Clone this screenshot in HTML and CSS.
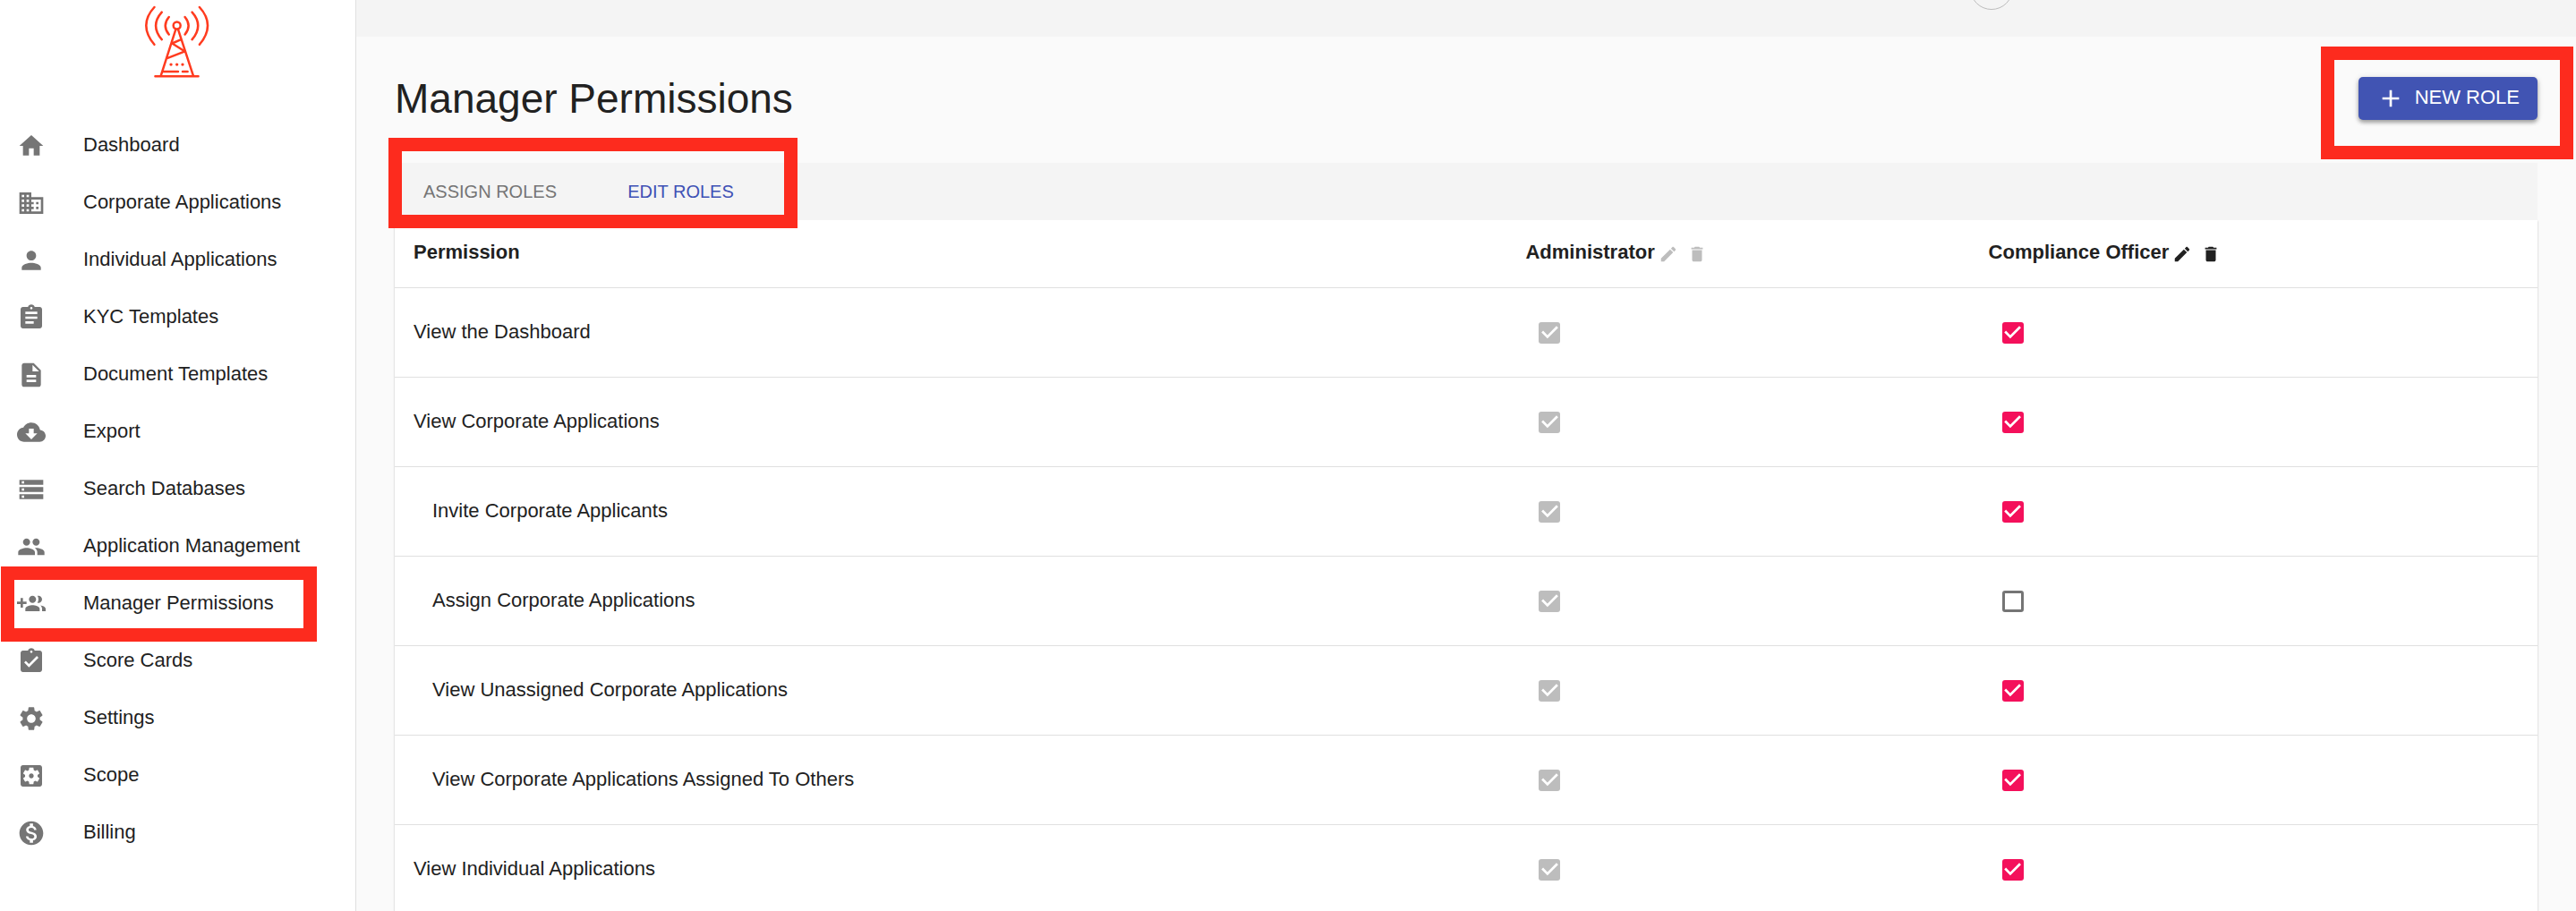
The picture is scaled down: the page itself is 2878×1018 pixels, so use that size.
FILE: index.html
```
<!DOCTYPE html>
<html lang="en">
<head>
<meta charset="utf-8">
<meta name="viewport" content="width=device-width, initial-scale=1">
<title>Manager Permissions</title>
<link rel="stylesheet" href="styles.css">
</head>
<body>
<svg class="sprite" aria-hidden="true">
  <symbol id="edit" viewBox="0 0 24 24"><path d="M3 17.25V21h3.75L17.81 9.94l-3.75-3.75L3 17.25zM20.71 7.04c.39-.39.39-1.02 0-1.41l-2.34-2.34c-.39-.39-1.02-.39-1.41 0l-1.83 1.83 3.75 3.75 1.83-1.83z"/></symbol>
  <symbol id="delete" viewBox="0 0 24 24"><path d="M6 19c0 1.1.9 2 2 2h8c1.1 0 2-.9 2-2V7H6v12zM19 4h-3.5l-1-1h-5l-1 1H5v2h14V4z"/></symbol>
</svg>
<div class="app">
  <aside class="sidebar">
    <a class="logo" href="#" aria-label="Home">
      <svg class="logo-mark" viewBox="480 15 225 250" fill="none" stroke="#ff3b1f" stroke-width="7.5" stroke-linecap="round" stroke-linejoin="round">
        <path d="M566 57Q542 86 566 116M542 41Q502 86 542 133M517 24Q462 84 517 150"/>
        <path d="M620 57Q644 86 620 116M644 41Q684 86 644 133M669 24Q724 84 669 150"/>
        <circle cx="593" cy="86" r="12"/>
        <path d="M589 99L539 255M597 99L648 255M520 257H665M607 133L577 146L620 173L558 197M549 241H597M612 241H629"/>
        <path stroke-width="10" d="M573 217h.1M593 217h.1M612 217h.1"/>
      </svg>
    </a>
    <nav class="nav">
      <a class="nav-item" href="#"><svg class="icon" viewBox="0 0 24 24"><path d="M10 20v-6h4v6h5v-8h3L12 3 2 12h3v8z"/></svg><span class="nav-label">Dashboard</span></a>
      <a class="nav-item" href="#"><svg class="icon" viewBox="0 0 24 24"><path d="M12 7V3H2v18h20V7H12zM6 19H4v-2h2v2zm0-4H4v-2h2v2zm0-4H4V9h2v2zm0-4H4V5h2v2zm4 12H8v-2h2v2zm0-4H8v-2h2v2zm0-4H8V9h2v2zm0-4H8V5h2v2zm10 12h-8v-2h2v-2h-2v-2h2v-2h-2V9h8v10zm-2-8h-2v2h2v-2zm0 4h-2v2h2v-2z"/></svg><span class="nav-label">Corporate Applications</span></a>
      <a class="nav-item" href="#"><svg class="icon" viewBox="0 0 24 24"><path d="M12 12c2.21 0 4-1.79 4-4s-1.79-4-4-4-4 1.79-4 4 1.79 4 4 4zm0 2c-2.67 0-8 1.34-8 4v2h16v-2c0-2.66-5.33-4-8-4z"/></svg><span class="nav-label">Individual Applications</span></a>
      <a class="nav-item" href="#"><svg class="icon" viewBox="0 0 24 24"><path d="M19 3h-4.18C14.4 1.84 13.3 1 12 1c-1.3 0-2.4.84-2.82 2H5c-1.1 0-2 .9-2 2v14c0 1.1.9 2 2 2h14c1.1 0 2-.9 2-2V5c0-1.1-.9-2-2-2zm-7 0c.55 0 1 .45 1 1s-.45 1-1 1-1-.45-1-1 .45-1 1-1zm2 14H7v-2h7v2zm3-4H7v-2h10v2zm0-4H7V7h10v2z"/></svg><span class="nav-label">KYC Templates</span></a>
      <a class="nav-item" href="#"><svg class="icon" viewBox="0 0 24 24"><path d="M14 2H6c-1.1 0-1.99.9-1.99 2L4 20c0 1.1.89 2 1.99 2H18c1.1 0 2-.9 2-2V8l-6-6zm2 16H8v-2h8v2zm0-4H8v-2h8v2zm-3-5V3.5L18.5 9H13z"/></svg><span class="nav-label">Document Templates</span></a>
      <a class="nav-item" href="#"><svg class="icon" viewBox="0 0 24 24"><path d="M19.35 10.04C18.67 6.59 15.64 4 12 4 9.11 4 6.6 5.64 5.35 8.04 2.34 8.36 0 10.91 0 14c0 3.31 2.69 6 6 6h13c2.76 0 5-2.24 5-5 0-2.64-2.05-4.78-4.65-4.96zM17 13l-5 5-5-5h3V9h4v4h3z"/></svg><span class="nav-label">Export</span></a>
      <a class="nav-item" href="#"><svg class="icon" viewBox="0 0 24 24"><path d="M2 20h20v-4H2v4zm2-3h2v2H4v-2zM2 4v4h20V4H2zm4 3H4V5h2v2zm-4 7h20v-4H2v4zm2-3h2v2H4v-2z"/></svg><span class="nav-label">Search Databases</span></a>
      <a class="nav-item" href="#"><svg class="icon" viewBox="0 0 24 24"><path d="M16 11c1.66 0 2.99-1.34 2.99-3S17.66 5 16 5c-1.66 0-3 1.34-3 3s1.34 3 3 3zm-8 0c1.66 0 2.99-1.34 2.99-3S9.66 5 8 5C6.34 5 5 6.34 5 8s1.34 3 3 3zm0 2c-2.33 0-7 1.17-7 3.5V19h14v-2.5c0-2.33-4.67-3.5-7-3.5zm8 0c-.29 0-.62.02-.97.05 1.16.84 1.97 1.97 1.97 3.45V19h6v-2.5c0-2.33-4.67-3.5-7-3.5z"/></svg><span class="nav-label">Application Management</span></a>
      <a class="nav-item highlighted" href="#" aria-current="page"><svg class="icon" viewBox="0 0 24 24"><path d="M8 10H5V7H3v3H0v2h3v3h2v-3h3v-2zm10 1c1.66 0 2.99-1.34 2.99-3S19.66 5 18 5c-.32 0-.63.05-.91.14.57.81.9 1.79.9 2.86s-.34 2.04-.9 2.86c.28.09.59.14.91.14zm-5 0c1.66 0 2.99-1.34 2.99-3S14.66 5 13 5c-1.66 0-3 1.34-3 3s1.34 3 3 3zm6.62 2.16c.83.73 1.38 1.66 1.38 2.84v2h3v-2c0-1.54-2.37-2.49-4.38-2.84zM13 13c-2 0-6 1-6 3v2h12v-2c0-2-4-3-6-3z"/></svg><span class="nav-label">Manager Permissions</span></a>
      <a class="nav-item" href="#"><svg class="icon" viewBox="0 0 24 24"><path d="M19 3h-4.18C14.4 1.84 13.3 1 12 1c-1.3 0-2.4.84-2.82 2H5c-1.1 0-2 .9-2 2v14c0 1.1.9 2 2 2h14c1.1 0 2-.9 2-2V5c0-1.1-.9-2-2-2zm-7 0c.55 0 1 .45 1 1s-.45 1-1 1-1-.45-1-1 .45-1 1-1zm-2 14l-4-4 1.41-1.41L10 14.17l6.59-6.59L18 9l-8 8z"/></svg><span class="nav-label">Score Cards</span></a>
      <a class="nav-item" href="#"><svg class="icon" viewBox="0 0 24 24"><path d="M19.14,12.94c0.04-0.3,0.06-0.61,0.06-0.94c0-0.32-0.02-0.64-0.07-0.94l2.03-1.58c0.18-0.14,0.23-0.41,0.12-0.61l-1.92-3.32c-0.12-0.22-0.37-0.29-0.59-0.22l-2.39,0.96c-0.5-0.38-1.03-0.7-1.62-0.94L14.4,2.81c-0.04-0.24-0.24-0.41-0.48-0.41h-3.84c-0.24,0-0.43,0.17-0.47,0.41L9.25,5.35C8.66,5.59,8.12,5.92,7.63,6.29L5.24,5.33c-0.22-0.08-0.47,0-0.59,0.22L2.74,8.87C2.62,9.08,2.66,9.34,2.86,9.48l2.03,1.58C4.84,11.36,4.8,11.69,4.8,12s0.02,0.64,0.07,0.94l-2.03,1.58c-0.18,0.14-0.23,0.41-0.12,0.61l1.92,3.32c0.12,0.22,0.37,0.29,0.59,0.22l2.39-0.96c0.5,0.38,1.03,0.7,1.62,0.94l0.36,2.54c0.05,0.24,0.24,0.41,0.48,0.41h3.84c0.24,0,0.44-0.17,0.47-0.41l0.36-2.54c0.59-0.24,1.13-0.56,1.62-0.94l2.39,0.96c0.22,0.08,0.47,0,0.59-0.22l1.92-3.32c0.12-0.22,0.07-0.47-0.12-0.61L19.14,12.94z M12,15.6c-1.98,0-3.6-1.62-3.6-3.6s1.62-3.6,3.6-3.6s3.6,1.62,3.6,3.6S13.98,15.6,12,15.6z"/></svg><span class="nav-label">Settings</span></a>
      <a class="nav-item" href="#"><svg class="icon" viewBox="0 0 24 24"><path d="M12 10c-1.1 0-2 .9-2 2s.9 2 2 2 2-.9 2-2-.9-2-2-2zm7-7H5c-1.11 0-2 .9-2 2v14c0 1.1.89 2 2 2h14c1.11 0 2-.9 2-2V5c0-1.1-.89-2-2-2zm-1.75 9c0 .23-.02.46-.05.68l1.48 1.16c.13.11.17.3.08.45l-1.4 2.42c-.09.15-.27.21-.43.15l-1.74-.7c-.36.28-.76.51-1.18.69l-.26 1.85c-.03.17-.18.3-.35.3h-2.8c-.17 0-.32-.13-.35-.29l-.26-1.85c-.43-.18-.82-.41-1.18-.69l-1.74.7c-.16.06-.34 0-.43-.15l-1.4-2.42c-.09-.15-.05-.34.08-.45l1.48-1.16c-.03-.23-.05-.46-.05-.69 0-.23.02-.46.05-.68l-1.48-1.16c-.13-.11-.17-.3-.08-.45l1.4-2.42c.09-.15.27-.21.43-.15l1.74.7c.36-.28.76-.51 1.18-.69l.26-1.85c.03-.17.18-.3.35-.3h2.8c.17 0 .32.13.35.29l.26 1.85c.43.18.82.41 1.18.69l1.74-.7c.16-.06.34 0 .43.15l1.4 2.42c.09.15.05.34-.08.45l-1.48 1.16c.03.23.05.46.05.69z"/></svg><span class="nav-label">Scope</span></a>
      <a class="nav-item" href="#"><svg class="icon" viewBox="0 0 24 24"><path d="M12 2C6.48 2 2 6.48 2 12s4.48 10 10 10 10-4.48 10-10S17.52 2 12 2zm1.41 16.09V20h-2.67v-1.93c-1.71-.36-3.16-1.46-3.27-3.4h1.96c.1 1.05.82 1.87 2.65 1.87 1.96 0 2.4-.98 2.4-1.59 0-.83-.44-1.61-2.67-2.14-2.48-.6-4.18-1.62-4.18-3.67 0-1.72 1.39-2.84 3.11-3.21V4h2.67v1.95c1.86.45 2.79 1.86 2.85 3.39H14.3c-.05-1.11-.64-1.87-2.22-1.87-1.5 0-2.4.68-2.4 1.64 0 .84.65 1.39 2.67 1.91s4.18 1.39 4.18 3.91c-.01 1.83-1.38 2.83-3.12 3.16z"/></svg><span class="nav-label">Billing</span></a>
    </nav>
  </aside>

  <div class="page">
    <header class="topbar"><span class="avatar"></span></header>
    <main class="content">
      <div class="heading">
        <h1 class="title">Manager Permissions</h1>
        <div class="action">
          <button class="new-role" type="button"><svg class="icon" viewBox="0 0 24 24"><path d="M19 13h-6v6h-2v-6H5v-2h6V5h2v6h6v2z"/></svg><span class="button-label">NEW ROLE</span></button>
        </div>
      </div>
      <div class="tabs" role="tablist">
        <button class="tab" type="button" role="tab" aria-selected="false">ASSIGN ROLES</button>
        <button class="tab" type="button" role="tab" aria-selected="true">EDIT ROLES</button>
      </div>
      <table class="permissions">
        <colgroup><col class="col-name"><col class="col-admin"><col class="col-officer"></colgroup>
        <thead>
          <tr>
            <th scope="col"><div class="role"><span class="role-name">Permission</span></div></th>
            <th scope="col"><div class="role"><span class="role-name" id="r1">Administrator</span><span class="tools"><button class="tool" type="button" disabled aria-label="Edit Administrator"><svg class="tool-icon"><use href="#edit"/></svg></button><button class="tool" type="button" disabled aria-label="Delete Administrator"><svg class="tool-icon"><use href="#delete"/></svg></button></span></div></th>
            <th scope="col"><div class="role"><span class="role-name" id="r2">Compliance Officer</span><span class="tools"><button class="tool" type="button" aria-label="Edit Compliance Officer"><svg class="tool-icon"><use href="#edit"/></svg></button><button class="tool" type="button" aria-label="Delete Compliance Officer"><svg class="tool-icon"><use href="#delete"/></svg></button></span></div></th>
          </tr>
        </thead>
        <tbody>
          <tr><th scope="row" id="p1">View the Dashboard</th><td><input class="check" type="checkbox" checked disabled aria-labelledby="p1 r1"></td><td><input class="check" type="checkbox" checked aria-labelledby="p1 r2"></td></tr>
          <tr><th scope="row" id="p2">View Corporate Applications</th><td><input class="check" type="checkbox" checked disabled aria-labelledby="p2 r1"></td><td><input class="check" type="checkbox" checked aria-labelledby="p2 r2"></td></tr>
          <tr class="nested"><th scope="row" id="p3">Invite Corporate Applicants</th><td><input class="check" type="checkbox" checked disabled aria-labelledby="p3 r1"></td><td><input class="check" type="checkbox" checked aria-labelledby="p3 r2"></td></tr>
          <tr class="nested"><th scope="row" id="p4">Assign Corporate Applications</th><td><input class="check" type="checkbox" checked disabled aria-labelledby="p4 r1"></td><td><input class="check" type="checkbox" aria-labelledby="p4 r2"></td></tr>
          <tr class="nested"><th scope="row" id="p5">View Unassigned Corporate Applications</th><td><input class="check" type="checkbox" checked disabled aria-labelledby="p5 r1"></td><td><input class="check" type="checkbox" checked aria-labelledby="p5 r2"></td></tr>
          <tr class="nested"><th scope="row" id="p6">View Corporate Applications Assigned To Others</th><td><input class="check" type="checkbox" checked disabled aria-labelledby="p6 r1"></td><td><input class="check" type="checkbox" checked aria-labelledby="p6 r2"></td></tr>
          <tr><th scope="row" id="p7">View Individual Applications</th><td><input class="check" type="checkbox" checked disabled aria-labelledby="p7 r1"></td><td><input class="check" type="checkbox" checked aria-labelledby="p7 r2"></td></tr>
        </tbody>
      </table>
    </main>
  </div>
</div>
</body>
</html>
```
FILE: styles.css
```
*,
*::before,
*::after {
  box-sizing: border-box;
}

body {
  margin: 0;
  background: #fafafa;
  color: #212121;
  font-family: "Liberation Sans", Arial, Helvetica, sans-serif;
  font-size: 22px;
  line-height: 32px;
}

button {
  padding: 0;
  border: 0;
  background: none;
  color: inherit;
  font: inherit;
  cursor: pointer;
}

.sprite {
  display: none;
}

.app {
  display: flex;
  height: 100vh;
  overflow: hidden;
}

/* Sidebar */
.sidebar {
  flex: 0 0 398px;
  border-right: 1px solid #e0e0e0;
  background: #fff;
}

.logo {
  display: flex;
  justify-content: center;
  height: 131px;
  padding: 5px 2px 0 0;
}

.logo-mark {
  width: 75px;
  height: 83px;
}

.nav {
  display: flex;
  flex-direction: column;
}

.nav-item {
  display: flex;
  align-items: center;
  gap: 42px;
  height: 64px;
  padding-left: 19px;
  color: inherit;
  text-decoration: none;
}

.nav-label {
  padding-bottom: 2px;
}

.icon {
  flex: none;
  width: 32px;
  height: 32px;
  fill: #757575;
}

/* Red call-out frames drawn over the page */
.highlighted,
.action,
.tabs {
  position: relative;
}

.highlighted::after,
.action::after,
.tabs::after {
  content: "";
  position: absolute;
  border: 15px solid #fd2b1e;
  pointer-events: none;
}

.highlighted::after {
  inset: -10px 43px -10px 1px;
}

.action::after {
  inset: -34px -40px -44px -42px;
}

.tabs::after {
  top: -28px;
  left: -7px;
  width: 457px;
  height: 101px;
}

/* Page */
.page {
  flex: 1;
  min-width: 0;
}

.topbar {
  position: relative;
  height: 41px;
  overflow: hidden;
  background: #f4f4f4;
}

.avatar {
  position: absolute;
  top: -37px;
  right: 629px;
  width: 48px;
  height: 48px;
  border: 1px solid #bdbdbd;
  border-radius: 50%;
}

.content {
  padding: 0 43px;
}

.heading {
  display: flex;
  align-items: center;
  justify-content: space-between;
  height: 141px;
  padding-bottom: 3px;
}

.title {
  margin: 0;
  font-size: 46px;
  font-weight: 400;
  line-height: 56px;
}

.new-role {
  display: flex;
  align-items: center;
  gap: 11px;
  height: 48px;
  padding: 0 20px;
  border-radius: 5px;
  background: #4154b3;
  box-shadow: 0 3px 4px rgba(0, 0, 0, .3), 0 1px 7px rgba(0, 0, 0, .14);
  color: #fff;
}

.new-role .icon {
  fill: #fff;
}

.button-label {
  padding-bottom: 2px;
}

.tabs {
  display: flex;
  height: 64px;
  background: #f4f4f4;
}

.tab {
  width: 213px;
  color: #757575;
  font-size: 20px;
}

.tab[aria-selected="true"] {
  color: #3f51b5;
}

/* Permission table */
.permissions {
  width: 100%;
  border-collapse: separate;
  border-spacing: 0;
  table-layout: fixed;
  background: #fff;
  box-shadow: 0 1px 2px rgba(0, 0, 0, .25);
}

.col-name {
  width: 51.9%;
}

.col-admin {
  width: 21.6%;
}

.permissions th,
.permissions td {
  padding: 0 21px;
  border-bottom: 1px solid #e0e0e0;
  text-align: left;
}

.permissions thead th {
  height: 76px;
}

.permissions tbody td {
  height: 100px;
}

.permissions tbody th {
  padding-bottom: 2px;
  font-weight: 400;
}

.permissions .nested th {
  padding-left: 42px;
}

.role {
  display: flex;
  align-items: center;
  gap: 4px;
}

.role-name {
  padding-bottom: 4px;
}

.tools {
  display: flex;
  gap: 10px;
}

.tool {
  display: flex;
}

.tool-icon {
  width: 22px;
  height: 22px;
  fill: #212121;
}

.tool:disabled .tool-icon {
  fill: #bdbdbd;
}

.check {
  display: block;
  width: 24px;
  height: 24px;
  margin: 0 15px;
  border: 3px solid #757575;
  border-radius: 3px;
  appearance: none;
}

.check:checked {
  border: 0;
  background: #f4105b;
}

.check:checked:disabled {
  background: #bdbdbd;
}

.check:checked::before {
  content: "";
  display: block;
  height: 100%;
  background: #fff;
  clip-path: polygon(39% 78%, 11% 50%, 19% 42%, 39% 62%, 81% 20%, 89% 28%);
}
```
